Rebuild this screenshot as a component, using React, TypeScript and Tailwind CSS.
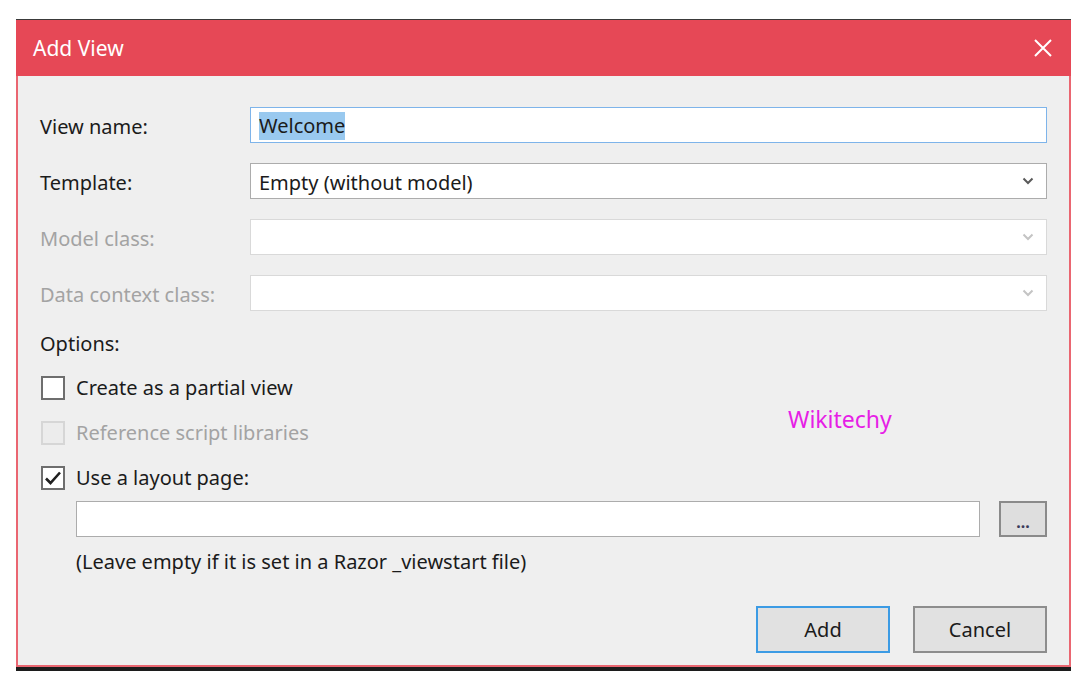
import React from 'react';

const font = { fontFamily: '"Noto Sans", "Open Sans", sans-serif' };

const Chevron = ({ muted }: { muted?: boolean }) => (
  <svg width="12" height="8" viewBox="0 0 12 8" className="shrink-0">
    <path d="M1.5 1.5 L6 6 L10.5 1.5" fill="none" stroke={muted ? '#c4c4c4' : '#5a5a5a'} strokeWidth="2" />
  </svg>
);

const Select = ({ value, disabled }: { value?: string; disabled?: boolean }) => (
  <div
    className={`h-[36px] flex items-center justify-between bg-white border pl-[8px] pr-[12px] ${
      disabled ? 'border-[#d9d9d9]' : 'border-[#acacac]'
    }`}
  >
    <span className="text-[20px] text-[#1b1b1b] pt-[3px]">{value}</span>
    <Chevron muted={disabled} />
  </div>
);

const Checkbox = ({ checked, disabled }: { checked?: boolean; disabled?: boolean }) => (
  <div
    className={`w-[24px] h-[24px] flex items-center justify-center border-2 ${
      disabled ? 'border-[#d6d6d6] bg-[#ececec]' : 'border-[#6e6e6e] bg-white'
    }`}
  >
    {checked && (
      <svg width="18" height="16" viewBox="0 0 18 16">
        <path d="M2 8.5 L6.5 13 L16 2.5" fill="none" stroke="#1f1f1f" strokeWidth="2.6" />
      </svg>
    )}
  </div>
);

export default function App() {
  return (
    <div className="w-[1084px] h-[683px] bg-white pt-[19px] pl-[16px] overflow-hidden" style={font}>
      <div className="w-[1055px] border-t border-[#3a3a3a]">
        {/* title bar */}
        <div className="h-[56px] bg-[#e64856] flex items-center justify-between pl-[17px] pr-[19px]">
          <span className="text-white text-[21px] pt-[1px]">Add View</span>
          <svg width="18" height="18" viewBox="0 0 18 18">
            <path d="M1 1 L17 17 M17 1 L1 17" stroke="#ffffff" strokeWidth="2" />
          </svg>
        </div>

        {/* body */}
        <div className="relative bg-[#efefef] border-x-2 border-b-2 border-[#ea6671] pt-[31px] pl-[22px] pr-[22px] pb-[12px] text-[#1b1b1b] text-[20px]">
          <div className="grid grid-cols-[210px_1fr] gap-y-[20px] items-center">
            <span className="pt-[3px]">View name:</span>
            <div className="h-[36px] flex items-center bg-white border border-[#7eb4ea] pl-[8px] pt-[2px]">
              <span className="bg-[#99c9ef] leading-[28px]">Welcome</span>
            </div>

            <span className="pt-[3px]">Template:</span>
            <Select value="Empty (without model)" />

            <span className="pt-[3px] text-[#a3a3a3]">Model class:</span>
            <Select disabled />

            <span className="pt-[3px] text-[#a3a3a3]">Data context class:</span>
            <Select disabled />
          </div>

          <div className="mt-[21px] leading-[24px]">Options:</div>

          <div className="mt-[20px] flex flex-col gap-[21px]">
            <label className="flex items-center gap-[11px] leading-[24px] pl-[1px]">
              <Checkbox />
              <span>Create as a partial view</span>
            </label>
            <label className="flex items-center gap-[11px] leading-[24px] pl-[1px] text-[#a3a3a3]">
              <Checkbox disabled />
              <span>Reference script libraries</span>
            </label>
            <label className="flex items-center gap-[11px] leading-[24px] pl-[1px]">
              <Checkbox checked />
              <span>Use a layout page:</span>
            </label>
          </div>

          <div className="mt-[11px] pl-[36px] flex gap-[19px]">
            <div className="flex-1 h-[36px] bg-white border border-[#acacac]" />
            <button className="w-[48px] h-[36px] bg-[#dedede] border-2 border-[#8a8a8a] text-[16px] font-bold text-[#3a3a5a] leading-none pt-[6px]">
              ...
            </button>
          </div>

          <div className="mt-[13px] pl-[36px] leading-[24px]">(Leave empty if it is set in a Razor _viewstart file)</div>

          <div className="mt-[32px] flex justify-end gap-[23px]">
            <button className="w-[134px] h-[47px] bg-[#e1e1e1] border-2 border-[#3c9be4] text-[20px]">Add</button>
            <button className="w-[134px] h-[47px] bg-[#e1e1e1] border-2 border-[#8d8d8d] text-[20px]">Cancel</button>
          </div>

          {/* watermark */}
          <span className="absolute left-[770px] top-[326px] text-[#e61ee6] text-[23px]">Wikitechy</span>
        </div>

        {/* strip of the window behind */}
        <div className="h-[4px] bg-[#1c1c1c]" />
      </div>
    </div>
  );
}
